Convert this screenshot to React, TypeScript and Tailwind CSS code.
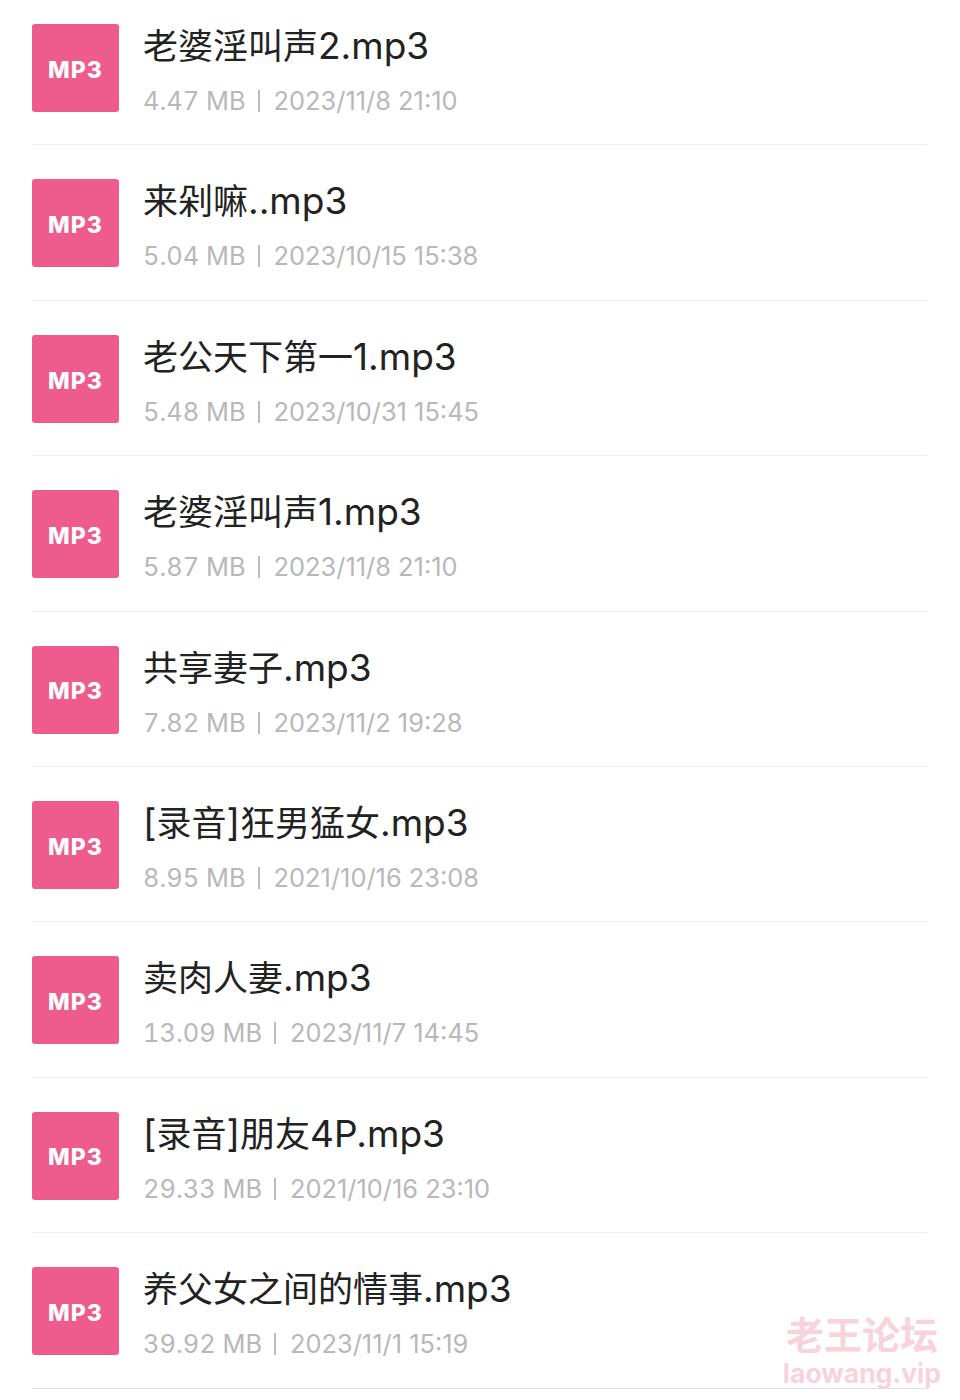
const files = [
  { name: '老婆淫叫声2.mp3', size: '4.47 MB', date: '2023/11/8 21:10' },
  { name: '来剁嘛..mp3', size: '5.04 MB', date: '2023/10/15 15:38' },
  { name: '老公天下第一1.mp3', size: '5.48 MB', date: '2023/10/31 15:45' },
  { name: '老婆淫叫声1.mp3', size: '5.87 MB', date: '2023/11/8 21:10' },
  { name: '共享妻子.mp3', size: '7.82 MB', date: '2023/11/2 19:28' },
  { name: '[录音]狂男猛女.mp3', size: '8.95 MB', date: '2021/10/16 23:08' },
  { name: '卖肉人妻.mp3', size: '13.09 MB', date: '2023/11/7 14:45' },
  { name: '[录音]朋友4P.mp3', size: '29.33 MB', date: '2021/10/16 23:10' },
  { name: '养父女之间的情事.mp3', size: '39.92 MB', date: '2023/11/1 15:19' },
];

export default function App() {
  return (
    <div className="relative h-[1400px] w-[960px] overflow-hidden bg-white pl-[32px] pr-[33px] font-['Inter','Noto_Sans_CJK_SC',sans-serif]">
      {/* the list is scrolled: the first row is cut off by 10px at the top */}
      <div className="-mt-[10px]">
        {files.map((f) => (
          <div key={f.name} className="flex h-[155.4px] items-start border-b border-[#eeeeee] pt-[34px] last:border-[#dddddd]">
            <div className="flex h-[88px] w-[87px] shrink-0 items-center justify-center rounded-[3px] bg-[#ee5b8d] pt-[4px] text-[23px] font-extrabold tracking-[1px] text-white">
              MP3
            </div>
            <div className="ml-[24px]">
              <div className="h-[44px] whitespace-nowrap text-[35px] leading-[44px] text-[#222222]">
                {f.name.split(/([\u4e00-\u9fff]+)/).map((part, i) => (
                  <span key={i} className={i % 2 === 0 ? 'text-[37px]' : ''}>{part}</span>
                ))}
              </div>
              <div className="mt-[16px] flex items-center text-[25.4px] leading-[34px] text-[#b8b8b8]">
                <span className="tabular-nums">{f.size}</span>
                <span className="ml-[12px] mr-[14px] h-[22px] w-[2px] bg-[#bcbcbc]" />
                <span>{f.date}</span>
              </div>
            </div>
          </div>
        ))}
      </div>
      <div className="absolute right-[19px] top-[1311px] flex flex-col items-center text-[#f8d3dc]">
        <div className="text-[38px] font-bold leading-[48px]">老王论坛</div>
        <div className="text-[26.5px] font-bold leading-[28px]">laowang.vip</div>
      </div>
    </div>
  );
}
